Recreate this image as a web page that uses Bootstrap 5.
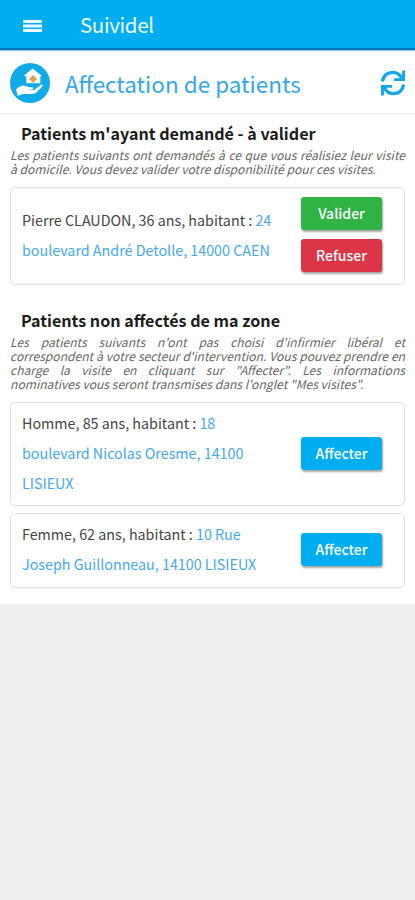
<!DOCTYPE html>
<html lang="fr">
<head>
<meta charset="utf-8">
<meta name="viewport" content="width=device-width, initial-scale=1">
<title>Suividel</title>
<link href="https://cdn.jsdelivr.net/npm/bootstrap@5.3.0/dist/css/bootstrap.min.css" rel="stylesheet">
<style>
  body { font-family: "Noto Sans CJK SC", "Noto Sans", sans-serif; background: #eee; color: #444; overflow: hidden; }
  .app-bar { height: 50px; background: #00aeef; border-bottom: 2px solid #0877b8; box-shadow: 0 1px 1px #9cc3ee; position: relative; padding: 4px 0 0 23px; }
  .app-name { font-size: 20.5px; letter-spacing: -.35px; line-height: 30px; margin: 0 0 4px 38px; color: #eefaff; }
  .sheet { height: 554px; }
  .page-head { height: 65px; border-bottom: 2px solid #f3f3f3; padding: 3px 9px 0 10px; }
  .page-title { font-size: 22.5px; line-height: 32px; color: #35a7e4; margin-left: 15px; font-weight: 400; }
  .content { padding: 0 10px 0 10px; }
  .section-title { font-size: 16.1px; line-height: 20px; font-weight: 700; color: #1c1c1c; padding-left: 11px; margin: 8px 0 5px; }
  .section-title.second { margin-top: 25px; margin-bottom: 5px; }
  .note { font-size: 12.1px; line-height: 14px; font-style: italic; color: #666; margin-bottom: 11px; }
  .note span { display: block; white-space: nowrap; text-align: left; }
  .note .full { text-align-last: justify; }
  .visit { border: 1px solid #e2dee0; border-radius: 5px; padding: 5px 22px 8px 11px; margin-bottom: 7px; min-height: 75px; }
  .visit.three { min-height: 104px; padding: 5px 22px 7px 11px; }
  .visit.tall { padding-top: 9px; padding-bottom: 12px; min-height: 98px; }
  .choices { row-gap: 9px; }
  .who { font-size: 14.3px; line-height: 30px; white-space: nowrap; }
  .who a { color: #45a8ea; text-decoration: none; }
  .act { width: 81px; height: 33px; padding: 0; border: 0; border-radius: 3px; font-size: 14px; line-height: 33px; color: #fff; box-shadow: 1px 2px 2px rgba(0,0,0,.35); font-weight: 500; }
  .blue, .blue:hover { background: #00aeef; color: #fff; }
  .green, .green:hover { background: #2fb344; color: #fff; }
  .red, .red:hover { background: #dc3545; color: #fff; }
</style>
<script src="https://cdn.jsdelivr.net/npm/bootstrap@5.3.0/dist/js/bootstrap.bundle.min.js"></script>
</head>
<body>
<header class="app-bar d-flex align-items-center">
  <svg width="19" height="14" viewBox="0 0 19 14" fill="#e9f8ff"><path d="M0 1h19v3H0zM0 5.500h19v3H0zM0 10h19v3H0z"/></svg>
  <span class="app-name">Suividel</span>
</header>
<main class="sheet bg-white">
  <div class="page-head d-flex align-items-center">
    <svg width="40" height="40" viewBox="0 0 40 40">
      <circle cx="20" cy="20" r="20" fill="#0fabe8"/>
      <path fill="#fff" d="M22.500 5.500 31.500 12.500l-1.200 1.300v6.400H16.300v-6.400L14 12.500z"/>
      <path fill="#d9a24e" d="M21.500 12.500h3v2h2v3h-2v2h-3v-2h-2v-3h2z"/>
      <path fill="#fff" d="M6 26.500c3.500-3.500 6-4.500 9-3.800l3.500 1.200c1.700.4 4-.2 4.700.8.700 1.300-1 2-4.500 2.200 4 .8 6.200-.2 8-2l4-3c1.500-1 2.500.3 1.500 1.600l-5.500 5.700c-1.500 1.300-3 1.700-5 1.700h-7c-2.200 0-3.500 0-7 2.100z"/>
    </svg>
    <h1 class="page-title mb-0">Affectation de patients</h1>
    <svg class="ms-auto" width="26" height="26" viewBox="0 0 27 26" fill="none" stroke="#14a7e8" stroke-width="3.400">
      <path d="M2.500 11.500C3.500 5 8 2 13.500 2c4 0 7 2 9 6M24.500 14.500C23.500 21 19 24 13.500 24c-4 0-7-2-9-6"/>
      <path fill="#14a7e8" stroke="none" d="M26 0v11H14.500V8H20l3-3V0zM1 26V15h11.500v3H7l-3 3v5z"/>
    </svg>
  </div>
  <div class="content">
    <h2 class="section-title">Patients m'ayant demandé - à valider</h2>
    <p class="note"><span class="full">Les patients suivants ont demandés à ce que vous réalisiez leur visite</span><span>à domicile. Vous devez valider votre disponibilité pour ces visites.</span></p>
    <section class="visit tall d-flex align-items-center justify-content-between">
      <div class="who">Pierre CLAUDON, 36 ans, habitant : <a href="#">24<br>boulevard André Detolle, 14000 CAEN</a></div>
      <div class="choices d-grid"><button class="btn act green">Valider</button><button class="btn act red">Refuser</button></div>
    </section>
    <h2 class="section-title second">Patients non affectés de ma zone</h2>
    <p class="note"><span class="full">Les patients suivants n'ont pas choisi d'infirmier libéral et</span><span class="full">correspondent à votre secteur d'intervention. Vous pouvez prendre en</span><span class="full">charge la visite en cliquant sur "Affecter". Les informations</span><span>nominatives vous seront transmises dans l'onglet "Mes visites".</span></p>
    <section class="visit three d-flex align-items-center justify-content-between">
      <div class="who">Homme, 85 ans, habitant : <a href="#">18<br>boulevard Nicolas Oresme, 14100<br>LISIEUX</a></div>
      <button class="btn act blue">Affecter</button>
    </section>
    <section class="visit d-flex align-items-center justify-content-between">
      <div class="who">Femme, 62 ans, habitant : <a href="#">10 Rue<br>Joseph Guillonneau, 14100 LISIEUX</a></div>
      <button class="btn act blue">Affecter</button>
    </section>
  </div>
</main>
</body>
</html>
